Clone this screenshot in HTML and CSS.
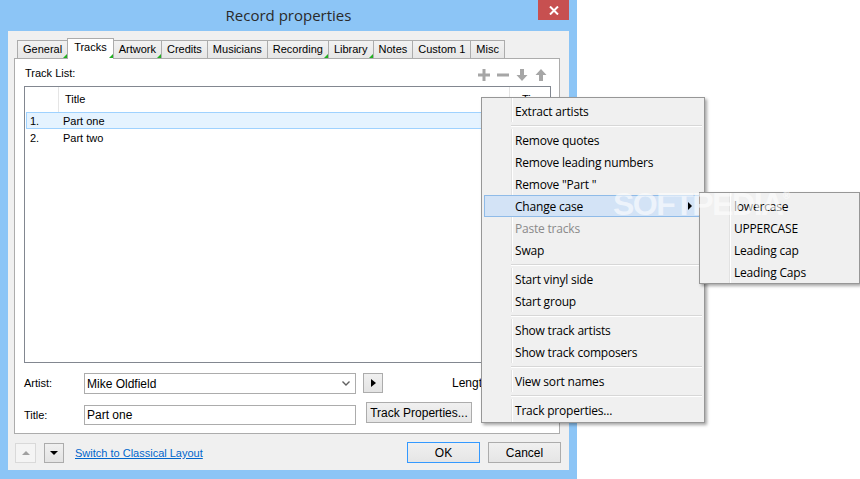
FILE: index.html
```html
<!DOCTYPE html>
<html>
<head>
<meta charset="utf-8">
<link rel="stylesheet" href="styles.css">
</head>
<body>
<div class="window">
  <div class="titlebar">
    <div class="title">Record properties</div>
    <div class="close"><svg width="10" height="9" viewBox="0 0 10 9"><path d="M1 0.5L9 8.5M9 0.5L1 8.5" stroke="#fff" stroke-width="2"/></svg></div>
  </div>
  <div class="client">
    <div class="tabs">
      <div class="tab mark">General</div>
      <div class="tab active mark">Tracks</div>
      <div class="tab mark">Artwork</div>
      <div class="tab">Credits</div>
      <div class="tab">Musicians</div>
      <div class="tab mark">Recording</div>
      <div class="tab mark">Library</div>
      <div class="tab">Notes</div>
      <div class="tab">Custom 1</div>
      <div class="tab">Misc</div>
    </div>
    <div class="panel">
      <div class="panel-head">
        <span class="lbl">Track List:</span>
        <div class="tools">
          <svg width="12" height="12" viewBox="0 0 12 12"><path d="M4.5 0h3v4.5H12v3H7.5V12h-3V7.5H0v-3h4.5z" fill="#a6a6a6"/></svg>
          <svg width="12" height="12" viewBox="0 0 12 12"><rect x="0" y="4.5" width="12" height="3" fill="#a6a6a6"/></svg>
          <svg width="12" height="12" viewBox="0 0 12 12"><path d="M4 0h4v6h3.5L6 12 0.5 6H4z" fill="#a6a6a6"/></svg>
          <svg width="12" height="12" viewBox="0 0 12 12"><path d="M4 12h4V6h3.5L6 0 0.5 6H4z" fill="#a6a6a6"/></svg>
        </div>
      </div>
      <div class="listbox">
        <div class="lv-header">
          <div class="h-num"></div>
          <div class="h-title">Title</div>
          <div class="h-time">Time</div>
        </div>
        <div class="lv-row sel"><span class="r-num">1.</span><span>Part one</span></div>
        <div class="lv-row"><span class="r-num">2.</span><span>Part two</span></div>
      </div>
      <div class="field-row">
        <span class="flabel">Artist:</span>
        <div class="combo"><span>Mike Oldfield</span><svg width="8" height="5" viewBox="0 0 8 5"><path d="M0.5 0.5L4 4 7.5 0.5" fill="none" stroke="#606060" stroke-width="1.4"/></svg></div>
        <div class="play"><svg width="5" height="8" viewBox="0 0 5 8"><path d="M0 0L5 4 0 8z" fill="#000"/></svg></div>
        <span class="length">Length:</span>
      </div>
      <div class="field-row second">
        <span class="flabel">Title:</span>
        <div class="input">Part one</div>
        <div class="btn tp">Track Properties...</div>
      </div>
    </div>
    <div class="footer">
      <div class="sbtn disabled"><svg width="8" height="4" viewBox="0 0 8 4"><path d="M0 4L4 0 8 4z" fill="#a0a0a0"/></svg></div>
      <div class="sbtn"><svg width="8" height="4" viewBox="0 0 8 4"><path d="M0 0L4 4 8 0z" fill="#000"/></svg></div>
      <a class="link">Switch to Classical Layout</a>
      <div class="btn ok">OK</div>
      <div class="btn cancel">Cancel</div>
    </div>
  </div>
</div>

<div class="menu main">
  <div class="mi">Extract artists</div>
  <div class="sep"></div>
  <div class="mi">Remove quotes</div>
  <div class="mi">Remove leading numbers</div>
  <div class="mi">Remove "Part "</div>
  <div class="mi hl">Change case<span class="arrow"></span></div>
  <div class="mi dis">Paste tracks</div>
  <div class="mi">Swap</div>
  <div class="sep"></div>
  <div class="mi">Start vinyl side</div>
  <div class="mi">Start group</div>
  <div class="sep"></div>
  <div class="mi">Show track artists</div>
  <div class="mi">Show track composers</div>
  <div class="sep"></div>
  <div class="mi">View sort names</div>
  <div class="sep"></div>
  <div class="mi">Track properties...</div>
</div>

<div class="menu sub">
  <div class="mi">lowercase</div>
  <div class="mi">UPPERCASE</div>
  <div class="mi">Leading cap</div>
  <div class="mi">Leading Caps</div>
</div>

<div class="watermark">SOFTPEDIA<sup>®</sup></div>
</body>
</html>
```

FILE: styles.css
```css
html, body {
  margin: 0;
  padding: 0;
}
body {
  width: 860px;
  height: 479px;
  background: #ffffff;
  font-family: "Liberation Sans", Arial, sans-serif;
  font-size: 11px;
  color: #000;
  position: relative;
  overflow: hidden;
}

.window {
  width: 577px;
  height: 479px;
  background: #8cc5f6;
  display: flex;
  flex-direction: column;
}

.titlebar {
  height: 31px;
  display: grid;
  grid-template-columns: 1fr auto 1fr;
  align-items: start;
}
.title {
  grid-column: 2;
  font-family: "Open Sans", "Noto Sans", sans-serif;
  font-size: 15px;
  line-height: 31px;
  color: #2a2a2a;
}
.close {
  grid-column: 3;
  justify-self: end;
  margin-right: 8px;
  width: 31px;
  height: 20px;
  background: #c75050;
  display: flex;
  align-items: center;
  justify-content: center;
}

.client {
  margin: 0 8px;
  height: 439px;
  background: #f0f0f0;
  display: flex;
  flex-direction: column;
}

/* tabs */
.tabs {
  display: flex;
  align-items: flex-end;
  height: 20px;
  margin-top: 7px;
  padding-left: 9px;
  position: relative;
  z-index: 1;
}
.tab {
  position: relative;
  box-sizing: border-box;
  height: 18px;
  line-height: 17px;
  padding: 0 5px;
  border: 1px solid #acacac;
  border-bottom: none;
  margin-right: -1px;
  background: linear-gradient(#f2f2f2, #e6e6e6);
  white-space: nowrap;
}
.tab.active {
  height: 21px;
  line-height: 17px;
  margin: 0 -1px -1px 0;
  padding: 0 6px;
  background: #fff;
  z-index: 2;
}
.tab.mark::after {
  content: "";
  position: absolute;
  right: 0;
  bottom: 0;
  border-left: 4px solid transparent;
  border-bottom: 4px solid #22b022;
}
.tab.active.mark::after {
  bottom: 1px;
}

/* panel */
.panel {
  margin-left: 6px;
  width: 546px;
  height: 376px;
  box-sizing: border-box;
  border: 1px solid #acacac;
  background: #fff;
  padding: 0 8px 0 9px;
  display: flex;
  flex-direction: column;
}
.panel-head {
  height: 27px;
  display: flex;
  align-items: center;
  justify-content: space-between;
}
.lbl {
  padding-left: 1px;
}
.tools {
  display: flex;
  gap: 7px;
  margin-right: 4px;
  margin-top: 4px;
}
.tools svg {
  display: block;
}

.listbox {
  height: 277px;
  box-sizing: border-box;
  border: 1px solid #828790;
  overflow: hidden;
}
.lv-header {
  display: flex;
  height: 25px;
}
.h-num {
  width: 33px;
  border-right: 1px solid #e5e5e5;
}
.h-title {
  width: 444px;
  padding-left: 6px;
  line-height: 25px;
  border-right: 1px solid #e5e5e5;
}
.h-time {
  padding-left: 12px;
  line-height: 25px;
  white-space: nowrap;
}
.lv-row {
  display: flex;
  align-items: center;
  height: 17px;
  box-sizing: border-box;
  margin: 0 2px 0 1px;
  border: 1px solid transparent;
}
.lv-row.sel {
  background: #e5f3ff;
  border-color: #9fd2ff;
}
.r-num {
  width: 33px;
  padding-left: 3px;
}

.field-row {
  display: flex;
  align-items: flex-start;
  height: 22px;
  margin-top: 10px;
}
.field-row.second {
  margin-top: 7px;
}
.flabel {
  width: 60px;
  line-height: 21px;
}
.combo {
  width: 272px;
  height: 21px;
  box-sizing: border-box;
  border: 1px solid #acacac;
  background: #fff;
  display: flex;
  align-items: center;
  justify-content: space-between;
  padding: 0 5px 0 2px;
  font-size: 12px;
}
.play {
  margin-left: 7px;
  width: 20px;
  height: 20px;
  box-sizing: border-box;
  border: 1px solid #acacac;
  background: linear-gradient(#f0f0f0, #e3e3e3);
  display: flex;
  align-items: center;
  justify-content: center;
}
.length {
  margin-left: 69px;
  line-height: 21px;
  font-size: 12px;
}
.second .flabel {
  margin-top: 3px;
}
.input {
  margin-top: 3px;
  width: 272px;
  height: 20px;
  box-sizing: border-box;
  border: 1px solid #acacac;
  background: #fff;
  padding-left: 2px;
  line-height: 18px;
  font-size: 12px;
}
.btn {
  box-sizing: border-box;
  height: 21px;
  border: 1px solid #acacac;
  background: linear-gradient(#f0f0f0, #e5e5e5);
  display: flex;
  align-items: center;
  justify-content: center;
  font-size: 12px;
}
.btn.tp {
  margin-left: 10px;
  width: 106px;
}

/* footer */
.footer {
  display: flex;
  align-items: flex-start;
  padding: 8px 8px 0 7px;
}
.sbtn {
  margin-top: 1px;
  width: 21px;
  height: 20px;
  box-sizing: border-box;
  border: 1px solid #acacac;
  background: linear-gradient(#f0f0f0, #e3e3e3);
  display: flex;
  align-items: center;
  justify-content: center;
  margin-right: 8px;
}
.sbtn.disabled {
  border-color: #d9d9d9;
  background: #f4f4f4;
}
.sbtn + .sbtn {
  width: 20px;
}
.link {
  margin-left: 3px;
  margin-top: 1px;
  line-height: 20px;
  color: #0066cc;
  text-decoration: underline;
  font-size: 11px;
}
.btn.ok {
  margin-left: auto;
  width: 73px;
  border-color: #3399ff;
}
.btn.cancel {
  margin-left: 8px;
  width: 73px;
}

/* context menus */
.menu {
  position: absolute;
  box-sizing: border-box;
  border: 1px solid #979797;
  padding: 2px 2px 1px 2px;
  background: linear-gradient(to right, #f0f0f0 29px, #e2e2e2 29px, #e2e2e2 30px, #ffffff 30px, #ffffff 31px, #f0f0f0 31px);
  box-shadow: 2px 2px 3px rgba(0, 0, 0, 0.35);
  font-family: "Open Sans", "Noto Sans", sans-serif;
  font-size: 12px;
  color: #000;
  z-index: 10;
}
.menu.main {
  left: 481px;
  top: 97px;
  width: 224px;
}
.menu.sub {
  left: 699px;
  top: 192px;
  width: 161px;
  padding-bottom: 0;
  z-index: 11;
}
.mi {
  height: 22px;
  box-sizing: border-box;
  border: 1px solid transparent;
  padding-left: 30px;
  display: flex;
  align-items: center;
  white-space: nowrap;
  letter-spacing: -0.2px;
}
.sub .mi {
  padding-left: 31px;
}
.mi.hl {
  background: #d3e3f6;
  border-color: #8fbbe8;
}
.mi.dis {
  color: #8a8a8a;
}
.arrow {
  margin-left: auto;
  margin-right: 9px;
  width: 0;
  height: 0;
  border-left: 4px solid #000;
  border-top: 4px solid transparent;
  border-bottom: 4px solid transparent;
}
.sep {
  height: 7px;
  margin-left: 27px;
  background: linear-gradient(#f0f0f0 3px, #d7d7d7 3px, #d7d7d7 4px, #ffffff 4px, #ffffff 5px, #f0f0f0 5px);
}

.watermark {
  position: absolute;
  left: 613px;
  top: 186px;
  font-family: "Liberation Sans", Arial, sans-serif;
  font-weight: bold;
  font-size: 32px;
  letter-spacing: -1.5px;
  color: rgba(255, 255, 255, 0.6);
  z-index: 20;
  white-space: nowrap;
  pointer-events: none;
}
.watermark sup {
  font-size: 10px;
  vertical-align: 16px;
  letter-spacing: 0;
}
```
